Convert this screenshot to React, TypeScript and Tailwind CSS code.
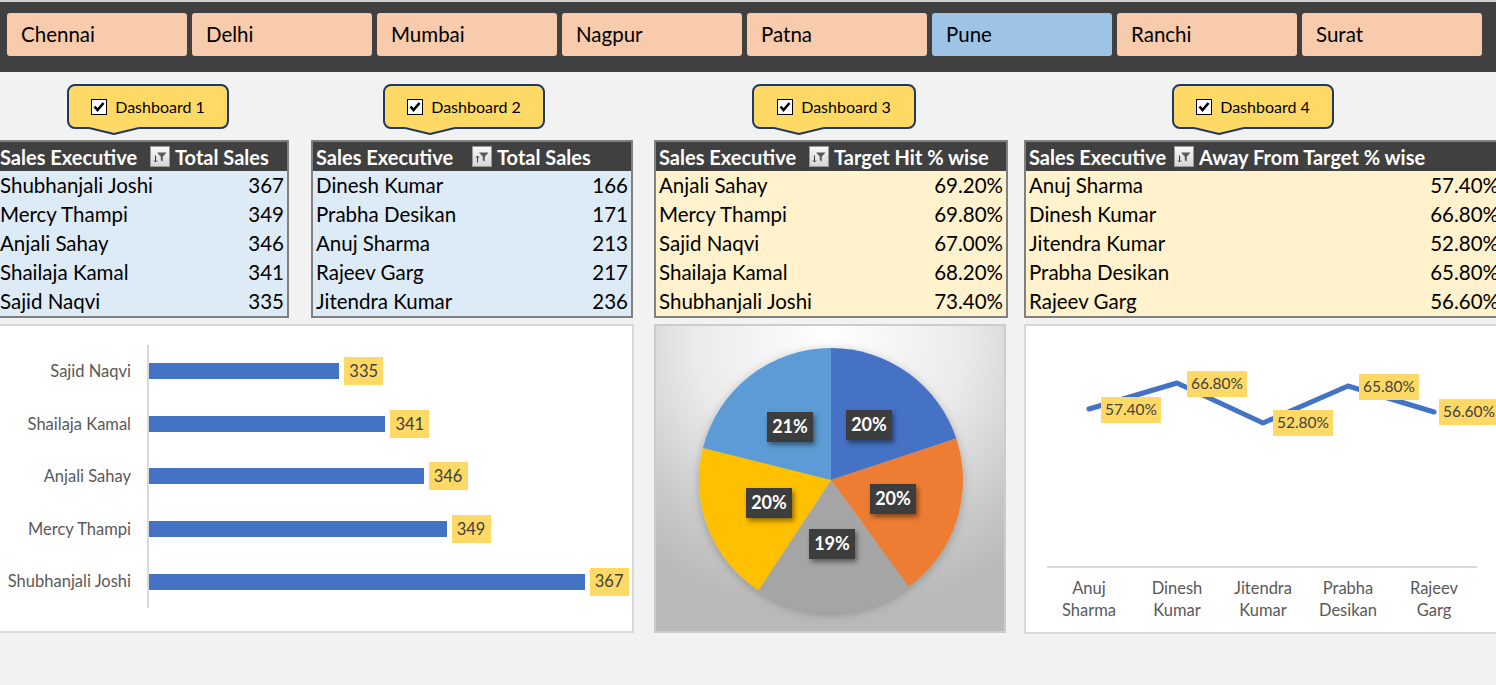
import React from "react";

const cities = ["Chennai", "Delhi", "Mumbai", "Nagpur", "Patna", "Pune", "Ranchi", "Surat"];

function Check() {
  return (
    <div className="w-[16px] h-[16px] bg-white border border-black flex items-center justify-center shrink-0">
      <svg width="12" height="12" viewBox="0 0 12 12">
        <path d="M1.5 5.5 L4.5 9 L10.5 2" stroke="black" strokeWidth="2.6" fill="none" />
      </svg>
    </div>
  );
}

function Callout({ label, className }: { label: string; className: string }) {
  return (
    <div
      className={`relative h-[45px] shrink-0 rounded-[8px] border-2 border-[#203864] bg-[#ffd966] flex items-center justify-center gap-[8px] ${className}`}
    >
      <Check />
      <span className="text-[16px] text-black leading-none">{label}</span>
      <svg className="absolute left-[20px] top-[40px]" width="50" height="10" viewBox="0 0 50 10">
        <path d="M0 0 L0 2 L25 8 L50 2 L50 0 Z" fill="#ffd966" />
        <path d="M0 2 L25 8 L50 2" stroke="#203864" strokeWidth="2" fill="none" strokeLinejoin="round" />
      </svg>
    </div>
  );
}

function FilterIcon({ up }: { up?: boolean }) {
  return (
    <div className="w-[20px] h-[21px] shrink-0 bg-linear-to-b from-[#f8f8f8] to-[#d6d6d6] border border-[#9a9a9a] flex items-center justify-center">
      <svg width="16" height="16" viewBox="0 0 16 16">
        <path d="M5 3.5 H14.5 L10.8 7.8 V12.5 L8.8 11.3 V7.8 Z" fill="#5a5a5a" />
        {up ? (
          <path d="M3.5 13.5 V7 M2 8.5 L3.5 7 L5 8.5" stroke="#3a3a3a" strokeWidth="1" fill="none" />
        ) : (
          <path d="M3.5 6.5 V13 M2 11.5 L3.5 13 L5 11.5" stroke="#3a3a3a" strokeWidth="1" fill="none" />
        )}
      </svg>
    </div>
  );
}

type Row = [string, string];

function Table({
  className,
  col1,
  title,
  rows,
  bodyBg,
  up,
}: {
  className: string;
  col1: string;
  title: string;
  rows: Row[];
  bodyBg: string;
  up?: boolean;
}) {
  return (
    <div className={`shrink-0 border-2 border-[#808080] ${className}`}>
      <div className="h-[29px] bg-[#404040] text-white font-bold text-[20px] flex items-center whitespace-nowrap">
        <div className={`flex items-center justify-between pr-[3px] ${col1}`}>
          <span>Sales Executive</span>
          <FilterIcon up={up} />
        </div>
        <span className="pl-[2px]">{title}</span>
      </div>
      <div className={bodyBg}>
        {rows.map(([n, v]) => (
          <div key={n} className="h-[29px] flex items-center justify-between pr-[3px] text-[20.5px] text-black whitespace-nowrap">
            <span>{n}</span>
            <span>{v}</span>
          </div>
        ))}
      </div>
    </div>
  );
}

const barData: [string, number][] = [
  ["Sajid Naqvi", 335],
  ["Shailaja Kamal", 341],
  ["Anjali Sahay", 346],
  ["Mercy Thampi", 349],
  ["Shubhanjali Joshi", 367],
];

function BarChart() {
  return (
    <div className="shrink-0 ml-[-5px] w-[639px] h-[309px] border-2 border-[#d9d9d9] bg-white">
      <div className="flex pt-[19px]">
        <div className="w-[134px] h-[263px] grid grid-rows-5">
          {barData.map(([n]) => (
            <div key={n} className="flex items-center justify-end text-[16.5px] text-[#595959] whitespace-nowrap">
              {n}
            </div>
          ))}
        </div>
        <div className="w-[16px]" />
        <div className="w-[2px] h-[263px] bg-[#d9d9d9]" />
        <div className="flex-1 h-[263px] grid grid-rows-5">
          {barData.map(([n, v]) => (
            <div key={n} className="flex items-center">
              <div className="h-[16px] bg-[#4472c4]" style={{ width: (v - 310.2) * 7.67 }} />
              <div className="ml-[5px] w-[39px] h-[28px] bg-[#ffd966] flex items-center justify-center text-[16.5px] text-[#404040]">
                {v}
              </div>
            </div>
          ))}
        </div>
      </div>
    </div>
  );
}

const pieVals = [
  { v: 69.2, c: "#4472c4", lx: 190, ly: 84, t: "20%" },
  { v: 69.8, c: "#ed7d31", lx: 214, ly: 158, t: "20%" },
  { v: 67.0, c: "#a5a5a5", lx: 153, ly: 203, t: "19%" },
  { v: 68.2, c: "#ffc000", lx: 90, ly: 162, t: "20%" },
  { v: 73.4, c: "#5b9bd5", lx: 111, ly: 86, t: "21%" },
];

function PieChart() {
  const cx = 175;
  const cy = 154;
  const r = 132;
  const total = pieVals.reduce((s, p) => s + p.v, 0);
  let acc = 0;
  const pt = (a: number) => {
    const rad = (a * Math.PI) / 180;
    return [cx + r * Math.sin(rad), cy - r * Math.cos(rad)];
  };
  const slices = pieVals.map((p) => {
    const a0 = (acc / total) * 360;
    acc += p.v;
    const a1 = (acc / total) * 360;
    const [x0, y0] = pt(a0);
    const [x1, y1] = pt(a1);
    const large = a1 - a0 > 180 ? 1 : 0;
    return { d: `M${cx} ${cy} L${x0} ${y0} A${r} ${r} 0 ${large} 1 ${x1} ${y1} Z`, c: p.c };
  });
  return (
    <div className="shrink-0 ml-[20px] w-[352px] h-[309px] border-2 border-[#cccccc] bg-[radial-gradient(ellipse_85%_90%_at_50%_5%,#ffffff_0%,#ebebeb_45%,#c8c8c8_80%,#b9b9b9_100%)]">
      <svg width="348" height="305" viewBox="0 0 348 305">
        <defs>
          <filter id="pshadow" x="-20%" y="-20%" width="140%" height="140%">
            <feDropShadow dx="0" dy="2" stdDeviation="5" floodColor="#000" floodOpacity="0.25" />
          </filter>
          <filter id="lshadow" x="-30%" y="-30%" width="160%" height="170%">
            <feDropShadow dx="2" dy="3" stdDeviation="2.5" floodColor="#000" floodOpacity="0.45" />
          </filter>
        </defs>
        <g filter="url(#pshadow)">
          {slices.map((s, i) => (
            <path key={i} d={s.d} fill={s.c} />
          ))}
        </g>
        {pieVals.map((p, i) => (
          <g key={i}>
            <rect x={p.lx} y={p.ly} width="46" height="30" fill="#3c3c3c" filter="url(#lshadow)" />
            <text
              x={p.lx + 23}
              y={p.ly + 16}
              textAnchor="middle"
              dominantBaseline="middle"
              fill="#ffffff"
              fontWeight="700"
              fontSize="18"
            >
              {p.t}
            </text>
          </g>
        ))}
      </svg>
    </div>
  );
}

const linePts = [
  { x: 63, y: 83, t: "57.40%", bx: 75, by: 71, l1: "Anuj", l2: "Sharma" },
  { x: 151, y: 57, t: "66.80%", bx: 161, by: 45, l1: "Dinesh", l2: "Kumar" },
  { x: 237, y: 97, t: "52.80%", bx: 247, by: 84, l1: "Jitendra", l2: "Kumar" },
  { x: 322, y: 60, t: "65.80%", bx: 333, by: 48, l1: "Prabha", l2: "Desikan" },
  { x: 408, y: 86, t: "56.60%", bx: 413, by: 73, l1: "Rajeev", l2: "Garg" },
];

function LineChart() {
  return (
    <div className="shrink-0 ml-[18px] w-[480px] h-[310px] border-2 border-[#d9d9d9] bg-white">
      <svg width="476" height="306" viewBox="0 0 476 306">
        <line x1="21" y1="241" x2="451" y2="241" stroke="#d9d9d9" strokeWidth="2" />
        <polyline
          points={linePts.map((p) => `${p.x},${p.y}`).join(" ")}
          fill="none"
          stroke="#4472c4"
          strokeWidth="5"
          strokeLinecap="round"
          strokeLinejoin="round"
        />
        {linePts.map((p) => (
          <g key={p.t}>
            <rect x={p.bx} y={p.by} width="60" height="26" fill="#ffd966" />
            <text x={p.bx + 30} y={p.by + 14} textAnchor="middle" dominantBaseline="middle" fill="#404040" fontSize="15.5">
              {p.t}
            </text>
            <text x={p.x} y={264} textAnchor="middle" dominantBaseline="middle" fill="#595959" fontSize="16.5">
              {p.l1}
            </text>
            <text x={p.x} y={286} textAnchor="middle" dominantBaseline="middle" fill="#595959" fontSize="16.5">
              {p.l2}
            </text>
          </g>
        ))}
      </svg>
    </div>
  );
}

export default function App() {
  return (
    <div className="w-[1496px] h-[685px] overflow-hidden bg-[#f2f2f2] font-[Lato,'Open_Sans',sans-serif]">
      <div className="h-[2px] bg-[#d0d0d0]" />
      <div className="h-[70px] bg-[#404040] pt-[11px] pl-[7px] flex gap-[5px]">
        {cities.map((c) => (
          <div
            key={c}
            className={`w-[180px] h-[43px] shrink-0 rounded-[3px] flex items-center pl-[14px] text-[20.5px] text-black ${
              c === "Pune" ? "bg-[#9dc3e6]" : "bg-[#f8cbad]"
            }`}
          >
            {c}
          </div>
        ))}
      </div>
      <div className="h-[68px] pt-[12px] flex items-start">
        <Callout label="Dashboard 1" className="ml-[67px] w-[162px]" />
        <Callout label="Dashboard 2" className="ml-[154px] w-[162px]" />
        <Callout label="Dashboard 3" className="ml-[207px] w-[164px]" />
        <Callout label="Dashboard 4" className="ml-[256px] w-[162px]" />
      </div>
      <div className="flex items-start">
        <Table
          className="ml-[-5px] w-[294px]"
          col1="w-[176px] pl-[3px]"
          title="Total Sales"
          bodyBg="bg-[#ddebf7] [&>div]:pl-[3px]"
          rows={[
            ["Shubhanjali Joshi", "367"],
            ["Mercy Thampi", "349"],
            ["Anjali Sahay", "346"],
            ["Shailaja Kamal", "341"],
            ["Sajid Naqvi", "335"],
          ]}
        />
        <Table
          className="ml-[22px] w-[322px]"
          col1="w-[182px] pl-[3px]"
          title="Total Sales"
          bodyBg="bg-[#ddebf7] [&>div]:pl-[3px]"
          up
          rows={[
            ["Dinesh Kumar", "166"],
            ["Prabha Desikan", "171"],
            ["Anuj Sharma", "213"],
            ["Rajeev Garg", "217"],
            ["Jitendra Kumar", "236"],
          ]}
        />
        <Table
          className="ml-[21px] w-[354px]"
          col1="w-[176px] pl-[3px]"
          title="Target Hit % wise"
          bodyBg="bg-[#fff2cc] [&>div]:pl-[3px]"
          rows={[
            ["Anjali Sahay", "69.20%"],
            ["Mercy Thampi", "69.80%"],
            ["Sajid Naqvi", "67.00%"],
            ["Shailaja Kamal", "68.20%"],
            ["Shubhanjali Joshi", "73.40%"],
          ]}
        />
        <Table
          className="ml-[16px] w-[480px]"
          col1="w-[171px] pl-[3px]"
          title="Away From Target % wise"
          bodyBg="bg-[#fff2cc] [&>div]:pl-[3px]"
          rows={[
            ["Anuj Sharma", "57.40%"],
            ["Dinesh Kumar", "66.80%"],
            ["Jitendra Kumar", "52.80%"],
            ["Prabha Desikan", "65.80%"],
            ["Rajeev Garg", "56.60%"],
          ]}
        />
      </div>
      <div className="flex items-start mt-[6px]">
        <BarChart />
        <PieChart />
        <LineChart />
      </div>
    </div>
  );
}
